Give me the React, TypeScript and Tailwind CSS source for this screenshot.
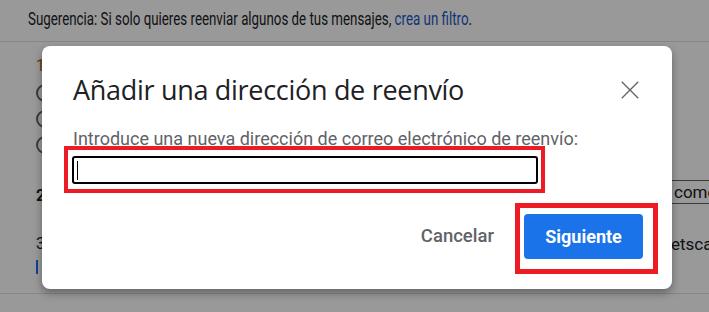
import React from 'react';

const CloseIcon: React.FC<{ className?: string }> = ({ className }) => (
  <svg className={className} viewBox="0 0 24 24" fill="none" stroke="currentColor" strokeWidth="1.4">
    <path d="M3 3L21 21M21 3L3 21" />
  </svg>
);

const PageBehind: React.FC = () => (
  <div className="absolute inset-0 bg-white font-['Roboto',sans-serif] text-[#202124]">
    <div className="h-[42px] border-b border-[#e0e0e0] pl-[28px] pt-[5px]">
      <p className="origin-left scale-x-[0.74] whitespace-nowrap text-[18px]">
        Sugerencia: Si solo quieres reenviar algunos de tus mensajes,{' '}
        <span className="text-[#1a57c9]">crea un filtro</span>.
      </p>
    </div>
    <div className="flex flex-col pl-[36px] pt-[14px] text-[16px]">
      <span className="leading-5 text-[#b06000]">1</span>
      <div className="mt-[8px] flex flex-col gap-[8px]">
        <span className="h-[18px] w-[18px] rounded-full border-2 border-[#5f6368]" />
        <span className="h-[18px] w-[18px] rounded-full border-2 border-[#5f6368]" />
        <span className="h-[18px] w-[18px] rounded-full border-2 border-[#5f6368]" />
      </div>
      <span className="mt-[32px] font-bold leading-5">2</span>
      <span className="mt-[28px] leading-5">3</span>
      <span className="mt-[6px] h-[14px] w-[2px] bg-[#1a73e8]" />
    </div>
    <div className="absolute left-[671px] top-[180px] h-[24px] w-[38px] overflow-hidden border-y border-l border-[#5f6368] pl-[2px] text-[17px] leading-[22px]">
      come
    </div>
    <div className="absolute left-[671px] top-[232px] w-[38px] overflow-hidden text-[17px]">etsca</div>
    <div className="absolute left-0 right-0 top-[293px] border-t border-[#e0e0e0]" />
  </div>
);

export default function App() {
  return (
    <div className="relative h-[312px] w-[709px] overflow-hidden">
      <PageBehind />
      <div className="absolute inset-0 bg-black/40" />
      <div className="absolute left-[42px] top-[46px] flex h-[243px] w-[630px] flex-col rounded-[8px] bg-white shadow-[0_4px_8px_rgba(0,0,0,0.35)]">
        <div className="flex items-start justify-between pl-[31px] pr-[31px] pt-[28px]">
          <h2 className="font-['Open_Sans',sans-serif] text-[27px] leading-8 tracking-[-0.3px] text-[#202124]">
            Añadir una dirección de reenvío
          </h2>
          <CloseIcon className="mt-[5px] h-[22px] w-[22px] text-[#5f6368]" />
        </div>
        <label className="mt-[23px] pl-[31px] font-['Roboto',sans-serif] text-[18px] leading-5 text-[#5f6368]">
          Introduce una nueva dirección de correo electrónico de reenvío:
        </label>
        <div className="ml-[22px] mt-[-3px] w-[481px] border-[4px] border-[#ed1c24] pb-[5px] pl-[4px] pr-[3px] pt-[6px]">
          <div className="flex h-[28px] items-center rounded-[3px] border-2 border-black pl-[3px]">
            <span className="h-[19px] w-px bg-black" />
          </div>
        </div>
        <div className="mt-[10px] flex items-start justify-end pr-[14px]">
          <button className="mr-[21px] mt-[21px] font-['Roboto',sans-serif] text-[18.5px] font-medium leading-6 text-[#5f6368]">
            Cancelar
          </button>
          <div className="border-[5px] border-[#ed1c24] pb-[10px] pl-[4px] pr-[10px] pt-[6px]">
            <button className="h-[45px] w-[119px] rounded-[4px] bg-[#1a73e8] font-['Roboto',sans-serif] text-[18px] font-bold text-white">
              Siguiente
            </button>
          </div>
        </div>
      </div>
    </div>
  );
}
